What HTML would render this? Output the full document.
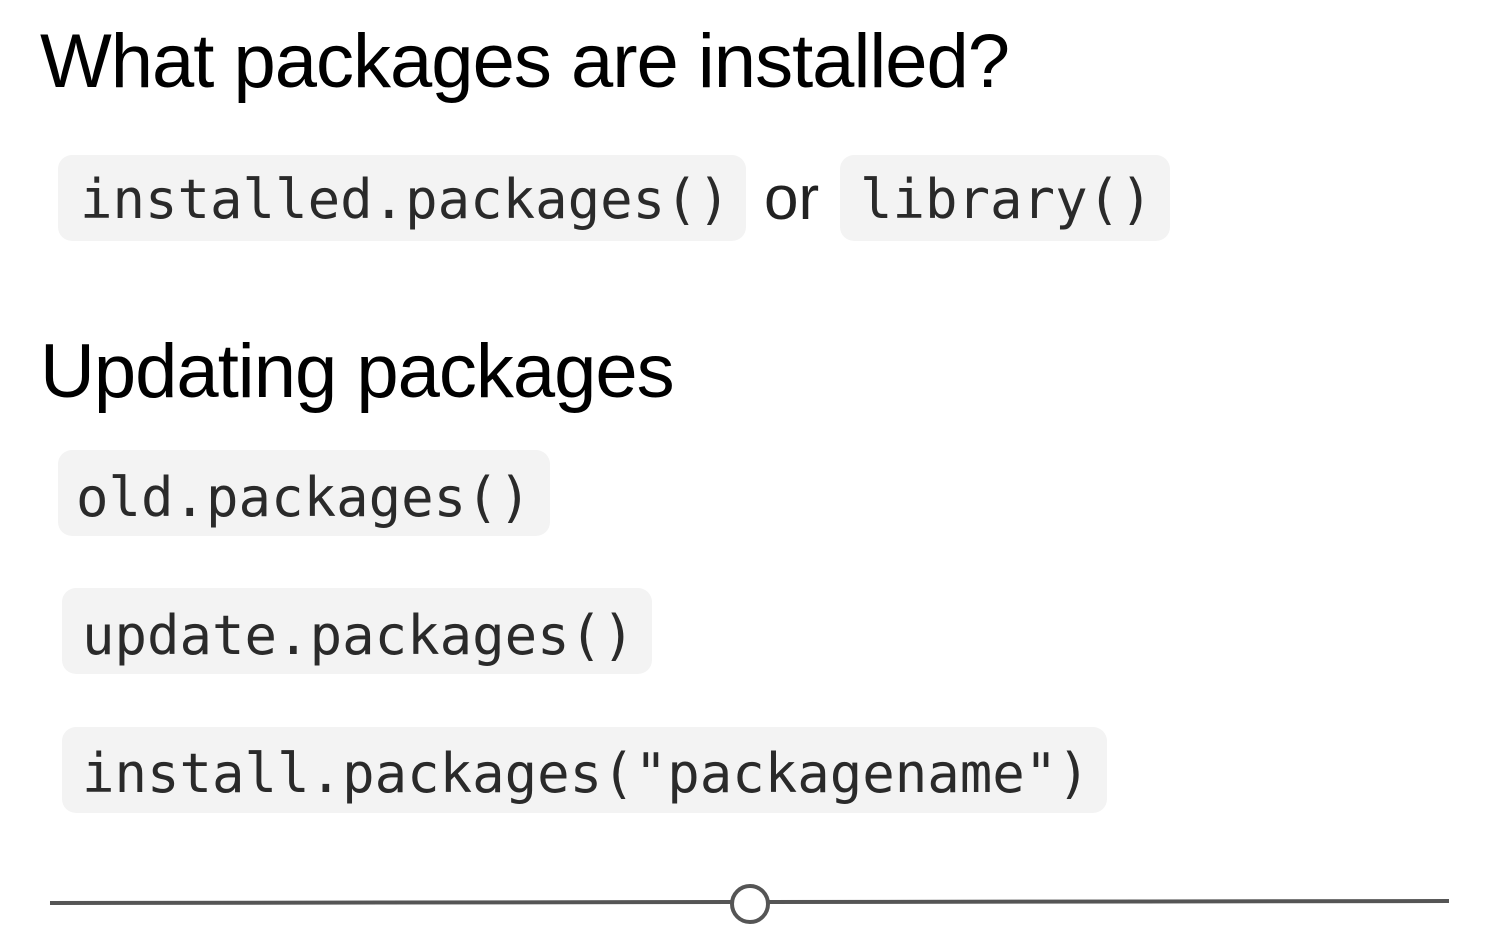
<!DOCTYPE html>
<html><head><style>
body{margin:0;width:1500px;height:938px;background:#fff;position:relative;overflow:hidden;font-family:"Liberation Sans",sans-serif}
.h{position:absolute;left:40px;font-size:76px;color:#000;line-height:1;white-space:nowrap;letter-spacing:-1px}
.box{position:absolute;background:#f3f3f3;border-radius:14px;height:86px}
.c{position:absolute;font-family:"DejaVu Sans Mono","Liberation Mono",monospace;font-size:54px;color:#2a2a2a;line-height:1;white-space:nowrap}
</style></head><body>
<div class="h" style="top:24px">What packages are installed?</div>
<div class="box" style="left:58px;top:155px;width:688px"></div>
<div class="c" style="left:80px;top:173px">installed.packages()</div>
<div style="position:absolute;left:764px;top:163px;font-size:62px;color:#222">or</div>
<div class="box" style="left:840px;top:155px;width:330px"></div>
<div class="c" style="left:860px;top:173px">library()</div>
<div class="h" style="top:334px">Updating packages</div>
<div class="box" style="left:58px;top:450px;width:492px"></div>
<div class="c" style="left:76px;top:471px">old.packages()</div>
<div class="box" style="left:62px;top:588px;width:590px"></div>
<div class="c" style="left:82px;top:609px">update.packages()</div>
<div class="box" style="left:62px;top:727px;width:1045px"></div>
<div class="c" style="left:82px;top:747px">install.packages("packagename")</div>
<svg style="position:absolute;left:0;top:0" width="1500" height="938">
<line x1="50" y1="903" x2="731" y2="902" stroke="#555" stroke-width="4"/>
<line x1="769" y1="902" x2="1449" y2="901" stroke="#555" stroke-width="4"/>
<circle cx="750" cy="904" r="18" fill="#fff" stroke="#555" stroke-width="4"/>
</svg>
</body></html>
